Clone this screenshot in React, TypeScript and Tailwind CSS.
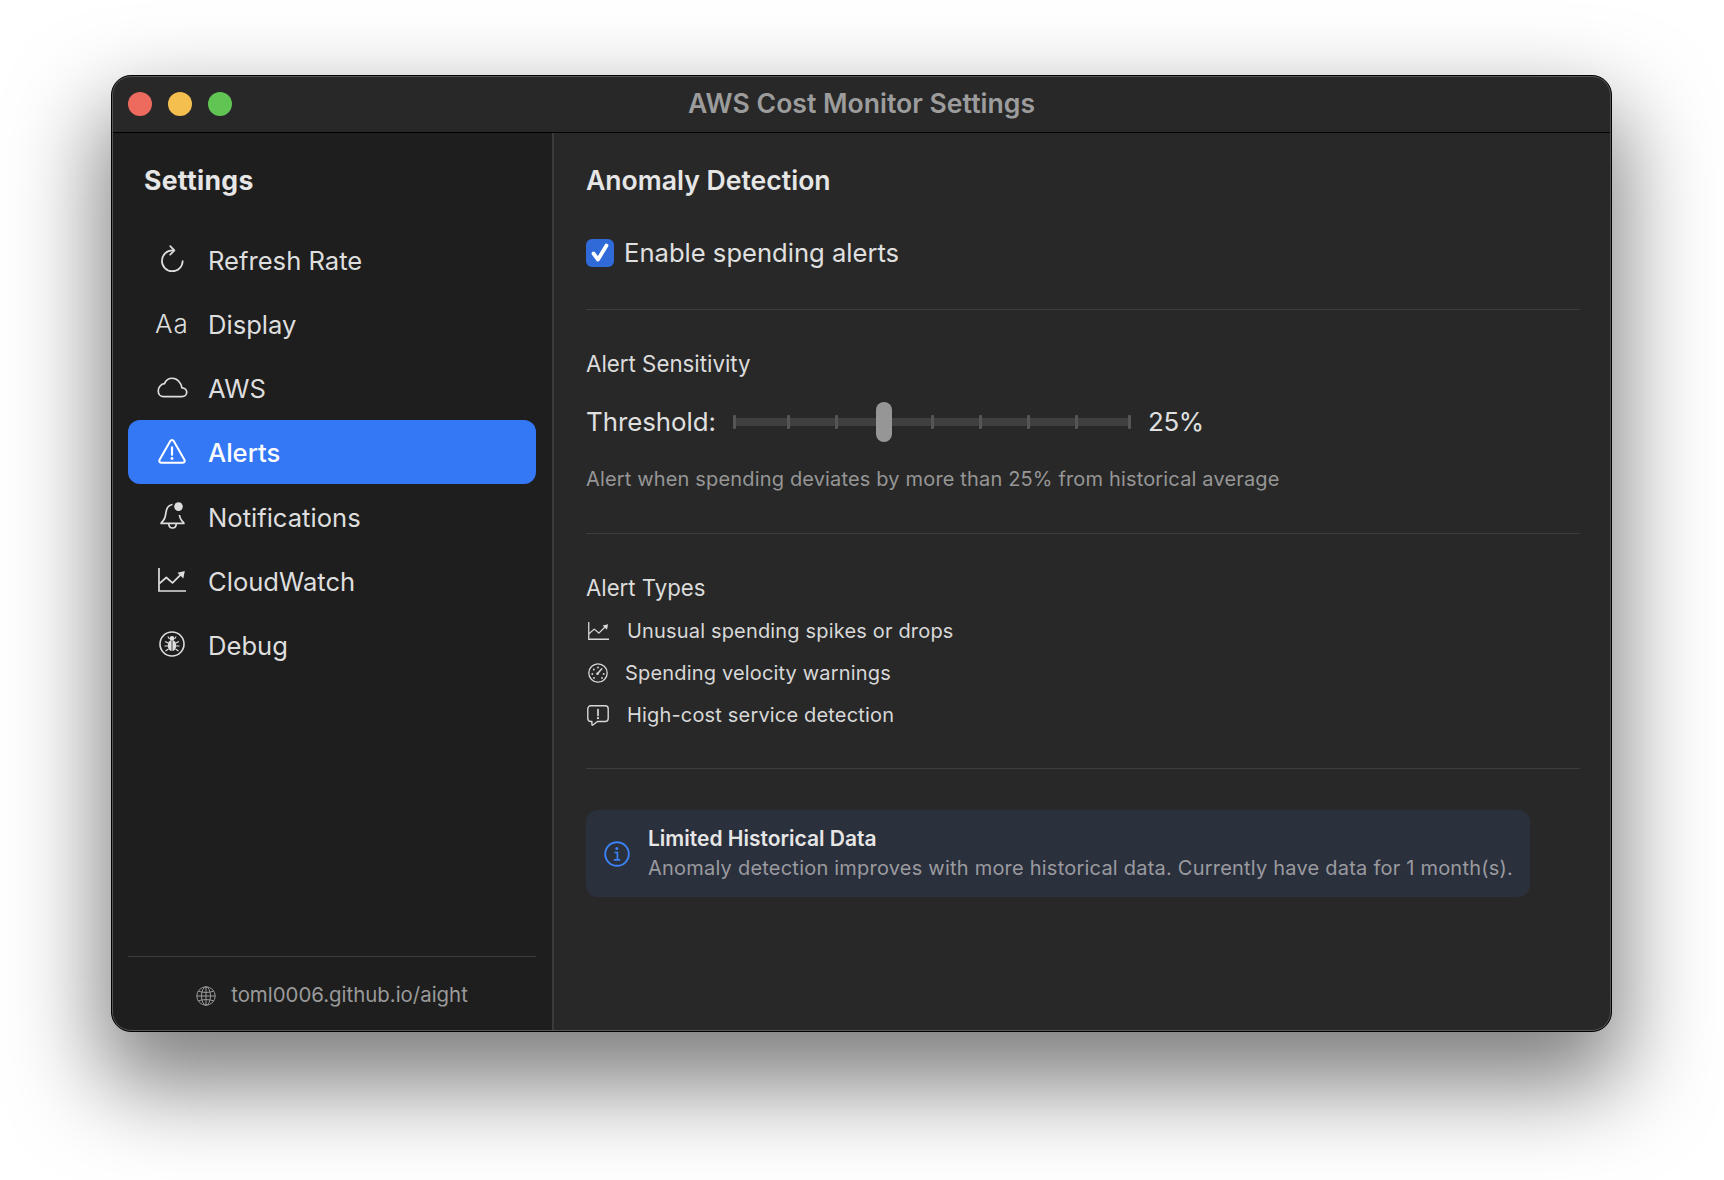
import React from 'react';

type IconProps = { className?: string };

function RefreshIcon({ className }: IconProps) {
  return (
    <svg viewBox="0 0 26 30" fill="none" stroke="currentColor" strokeWidth="1.8" strokeLinecap="round" strokeLinejoin="round" className={className}>
      <path d="M13 5.6A10.8 10.8 0 1 0 23.6 16.6" />
      <path d="M10.6 1.2 15 5.6l-4.4 4.3" />
    </svg>
  );
}

function CloudIcon({ className }: IconProps) {
  return (
    <svg viewBox="0 0 32 22" fill="none" stroke="currentColor" strokeWidth="1.8" strokeLinejoin="round" className={className}>
      <path d="M6.6 20.6h19.2c2.9 0 5.1-2 5.1-4.6 0-2.7-2.2-4.7-5-4.7C25 6.4 21.2 1.3 15.8 1.3c-4.1 0-6.900 2.4-8.200 5.700C4.100 7.300 1.100 10.700 1.100 14.600c0 3.400 2.300 6 5.500 6Z" />
    </svg>
  );
}

function TriangleIcon({ className }: IconProps) {
  return (
    <svg viewBox="0 0 28 25" fill="none" stroke="currentColor" className={className}>
      <path d="M12.3 2.100 1.600 20.800c-.8 1.500.2 3 1.800 3h21.200c1.600 0 2.600-1.500 1.800-3L15.700 2.100c-.8-1.400-2.600-1.400-3.400 0Z" strokeWidth="2" strokeLinejoin="round" />
      <path d="M14 8.400v7.400" strokeWidth="2.200" strokeLinecap="round" />
      <circle cx="14" cy="19.500" r="1.400" fill="currentColor" stroke="none" />
    </svg>
  );
}

function BellIcon({ className }: IconProps) {
  return (
    <svg viewBox="0 0 25 27" fill="none" stroke="currentColor" strokeWidth="1.700" strokeLinejoin="round" className={className}>
      <path d="M12.500 2.500C8.200 3 6.500 6.400 6 10.400c-.4 3.400-1 6-2.600 8-1 1.300-2.300 2-2.300 3h22.800c0-1-1.300-1.700-2.300-3-1.300-1.600-1.900-3.300-2.200-5.400" />
      <path d="M8.800 21.800c0 2.700 1.500 4.200 3.700 4.200s3.700-1.500 3.700-4.200" />
      <circle cx="18.500" cy="4.600" r="4.300" fill="currentColor" stroke="none" />
    </svg>
  );
}

function ChartIcon({ className }: IconProps) {
  return (
    <svg viewBox="0 0 28 24" fill="none" stroke="currentColor" strokeWidth="1.700" className={className}>
      <path d="M1 0v23h27" />
      <path d="m1.300 15.700 7-6.200 6.200 5.300 9.500-9.500" strokeLinejoin="round" />
      <path d="M19.500 4.700 26.800 3l-1.500 7.400Z" fill="currentColor" stroke="none" />
    </svg>
  );
}

function DebugIcon({ className }: IconProps) {
  return (
    <svg viewBox="0 0 26 26" fill="none" stroke="currentColor" strokeWidth="1.600" className={className}>
      <circle cx="13" cy="13" r="12" />
      <ellipse cx="13" cy="14.500" rx="4.200" ry="5.500" fill="currentColor" stroke="none" />
      <circle cx="13" cy="7.500" r="2.400" fill="currentColor" stroke="none" />
      <path d="M8.800 5.500 10.500 8M17.200 5.500 15.500 8M6 10.500l3.500 1.800M20 10.500l-3.500 1.800M5.500 15h3.500M20.500 15H17M6.500 20l3-2M19.500 20l-3-2" strokeWidth="1.200" />
      <path d="M13 9.500v10.500" stroke="#1e1e1e" strokeWidth=".8" />
    </svg>
  );
}

function GaugeIcon({ className }: IconProps) {
  return (
    <svg viewBox="0 0 20 20" fill="none" stroke="currentColor" strokeWidth="1.300" className={className}>
      <circle cx="10" cy="10" r="9.200" />
      <path d="m9.500 10.800 4.300-5" strokeWidth="1.500" strokeLinecap="round" />
      <circle cx="9.500" cy="10.800" r="1.300" fill="currentColor" stroke="none" />
      <circle cx="4.300" cy="11" r=".9" fill="currentColor" stroke="none" />
      <circle cx="5.800" cy="6.500" r=".9" fill="currentColor" stroke="none" />
      <circle cx="10" cy="4.500" r=".9" fill="currentColor" stroke="none" />
      <circle cx="15.700" cy="11" r=".9" fill="currentColor" stroke="none" />
      <circle cx="6" cy="15" r=".9" fill="currentColor" stroke="none" />
      <circle cx="14" cy="15" r=".9" fill="currentColor" stroke="none" />
    </svg>
  );
}

function BubbleIcon({ className }: IconProps) {
  return (
    <svg viewBox="0 0 22 21" fill="none" stroke="currentColor" className={className}>
      <path d="M3.800 .8h14.400c1.800 0 3 1.200 3 3v9.700c0 1.800-1.200 3-3 3H10.500l-4.600 3.500c-.6.400-1 .1-1-.5v-3H3.800c-1.800 0-3-1.200-3-3V3.800c0-1.800 1.200-3 3-3Z" strokeWidth="1.400" strokeLinejoin="round" />
      <path d="M11 4.500v6" strokeWidth="1.700" strokeLinecap="round" />
      <circle cx="11" cy="13.200" r="1.100" fill="currentColor" stroke="none" />
    </svg>
  );
}

function GlobeIcon({ className }: IconProps) {
  return (
    <svg viewBox="0 0 20 20" fill="none" stroke="currentColor" strokeWidth="1" className={className}>
      <circle cx="10" cy="10" r="9.200" />
      <ellipse cx="10" cy="10" rx="4.500" ry="9.200" />
      <path d="M10 .8v18.400M.8 10h18.400M2.300 5.200c4.500 1.600 10.900 1.600 15.400 0M2.300 14.800c4.500-1.600 10.900-1.600 15.400 0" />
    </svg>
  );
}

function InfoIcon({ className }: IconProps) {
  return (
    <svg viewBox="0 0 26 26" fill="none" stroke="currentColor" className={className}>
      <circle cx="13" cy="13" r="11.800" strokeWidth="1.900" />
      <circle cx="12.800" cy="7.400" r="1.500" fill="currentColor" stroke="none" />
      <path d="M10.400 11.500h3v7.300M9.900 18.800h6.400" strokeWidth="1.700" />
    </svg>
  );
}

function CheckIcon({ className }: IconProps) {
  return (
    <svg viewBox="0 0 28 28" fill="none" stroke="currentColor" strokeWidth="3.800" strokeLinecap="round" strokeLinejoin="round" className={className}>
      <path d="m7.500 14.500 4.500 6 8.500-14" />
    </svg>
  );
}

const navItems = [
  { label: 'Refresh Rate', icon: <RefreshIcon className="w-[25px] h-[29px]" /> },
  { label: 'Display', icon: <span className="text-[26px] font-light tracking-[1px]">Aa</span> },
  { label: 'AWS', icon: <CloudIcon className="w-[31px] h-[21px]" /> },
  { label: 'Alerts', icon: <TriangleIcon className="w-[28px] h-[25px]" />, active: true },
  { label: 'Notifications', icon: <BellIcon className="w-[25px] h-[27px]" /> },
  { label: 'CloudWatch', icon: <ChartIcon className="w-[28px] h-[24px]" /> },
  { label: 'Debug', icon: <DebugIcon className="w-[26px] h-[26px]" /> },
];

// px offsets along the slider track, thumb sits on the missing one
const ticks = [0, 54, 102, 198, 246, 294, 342, 395];

function Divider() {
  return <div className="h-px bg-[#3d3d3d]" />;
}

function AlertType({ icon, label, gap }: { icon: React.ReactNode; label: string; gap: string }) {
  return (
    <div className={`flex items-center h-[24px] pl-[1px] text-[20px] tracking-[0.17px] text-[#d8d8d8] ${gap}`}>
      <span className="w-[22px] flex justify-center">{icon}</span>
      <span>{label}</span>
    </div>
  );
}

export default function App() {
  return (
    <div className="w-[1724px] h-[1180px] bg-white pt-[75px] pl-[111px] font-['Inter',sans-serif] overflow-hidden">
      <div className="relative w-[1501px] h-[957px] rounded-[20px] border border-black bg-[#282828] overflow-hidden flex flex-col shadow-[0_44px_90px_10px_rgba(0,0,0,0.5)]">
        {/* title bar */}
        <div className="relative h-[57px] shrink-0 flex items-center pl-[16px] gap-[16px] bg-[#282828] border-b border-black">
          <div className="w-[24px] h-[24px] rounded-full bg-[#ed6a5e]" />
          <div className="w-[24px] h-[24px] rounded-full bg-[#f4bf4f]" />
          <div className="w-[24px] h-[24px] rounded-full bg-[#61c554]" />
          <div className="absolute inset-0 flex items-center justify-center pb-[1px] text-[26.6px] font-semibold text-[#9c9c9c]">
            AWS Cost Monitor Settings
          </div>
        </div>

        <div className="flex flex-1 min-h-0">
          {/* sidebar */}
          <aside className="w-[442px] shrink-0 flex flex-col bg-[#1e1e1e] border-r-2 border-[#3a3a3a] px-[16px]">
            <div className="h-[30px] mt-[33px] ml-[16px] flex items-center text-[26.6px] font-bold tracking-[0.3px] text-[#e6e6e6]">Settings</div>
            <nav className="mt-[31px] flex flex-col">
              {navItems.map((item) => (
                <div
                  key={item.label}
                  className={`h-[64.2px] flex items-center pl-[28px] gap-[20px] rounded-[12px] text-[25.6px] ${
                    item.active ? 'bg-[#3478f6] text-white font-medium' : 'text-[#dedede]'
                  }`}
                >
                  <span className="w-[32px] flex justify-center items-center">{item.icon}</span>
                  <span className="pt-[4px]">{item.label}</span>
                </div>
              ))}
            </nav>
            <div className="mt-auto h-[75px] border-t border-[#3d3d3d] flex items-center justify-center gap-[15px] pt-[3px] text-[20.4px] text-[#9a9a9a]">
              <GlobeIcon className="w-[20px] h-[20px]" />
              <span>toml0006.github.io/aight</span>
            </div>
          </aside>

          {/* detail pane */}
          <main className="flex-1 pl-[32px] pr-[31px] pt-[33px]">
            <h1 className="h-[30px] flex items-center text-[26.6px] font-semibold text-[#e6e6e6]">Anomaly Detection</h1>

            <label className="mt-[43px] h-[28px] flex items-center gap-[10px] text-[25.6px] text-[#e0e0e0]">
              <span className="w-[28px] h-[28px] rounded-[6px] bg-[#3069d8] flex items-center justify-center text-white">
                <CheckIcon className="w-[28px] h-[28px]" />
              </span>
              Enable spending alerts
            </label>
            <div className="mt-[42px]"><Divider /></div>

            <h2 className="mt-[42px] h-[24px] flex items-center text-[22.3px] text-[#dcdcdc]">Alert Sensitivity</h2>
            <div className="mt-[26px] h-[40px] flex items-center text-[25.8px] text-[#e0e0e0]">
              <span className="w-[147px]">Threshold:</span>
              <div className="relative w-[398px] h-[40px] flex items-center">
                <div className="w-full h-[8px] bg-[#404040]" />
                {ticks.map((left) => (
                  <div key={left} className="absolute top-[13px] w-[3px] h-[14px] rounded-[1px] bg-[#555555]" style={{ left }} />
                ))}
                <div className="absolute left-[143px] top-0 w-[16px] h-[40px] rounded-[8px] bg-[#969696]" />
              </div>
              <span className="ml-[17px] tracking-[-0.3px]">25%</span>
            </div>
            <p className="mt-[25px] h-[24px] flex items-center text-[20px] tracking-[0.16px] text-[#969696]">
              Alert when spending deviates by more than 25% from historical average
            </p>
            <div className="mt-[42px]"><Divider /></div>

            <h2 className="mt-[42px] h-[24px] flex items-center text-[22.2px] text-[#dcdcdc]">Alert Types</h2>
            <div className="mt-[19px] flex flex-col gap-[18px]">
              <AlertType icon={<ChartIcon className="w-[21px] h-[18px]" />} label="Unusual spending spikes or drops" gap="gap-[18px]" />
              <AlertType icon={<GaugeIcon className="w-[20px] h-[20px]" />} label="Spending velocity warnings" gap="gap-[16px]" />
              <AlertType icon={<BubbleIcon className="w-[22px] h-[21px]" />} label="High-cost service detection" gap="gap-[18px]" />
            </div>
            <div className="mt-[41px]"><Divider /></div>

            <div className="mt-[41px] w-[944px] h-[87px] rounded-[12px] bg-[#2b303d] flex items-center pl-[18px] gap-[18px]">
              <InfoIcon className="w-[26px] h-[26px] text-[#3b82f6]" />
              <div className="flex flex-col gap-[5px]">
                <div className="h-[24px] flex items-center text-[21px] font-semibold text-[#e6e6e6]">Limited Historical Data</div>
                <div className="h-[24px] flex items-center text-[20px] tracking-[0.22px] text-[#9a9a9f]">
                  Anomaly detection improves with more historical data. Currently have data for 1 month(s).
                </div>
              </div>
            </div>
          </main>
        </div>
        {/* edge highlight of the window */}
        <div className="absolute inset-0 rounded-[19px] border border-[#565656] pointer-events-none" />
      </div>
    </div>
  );
}
